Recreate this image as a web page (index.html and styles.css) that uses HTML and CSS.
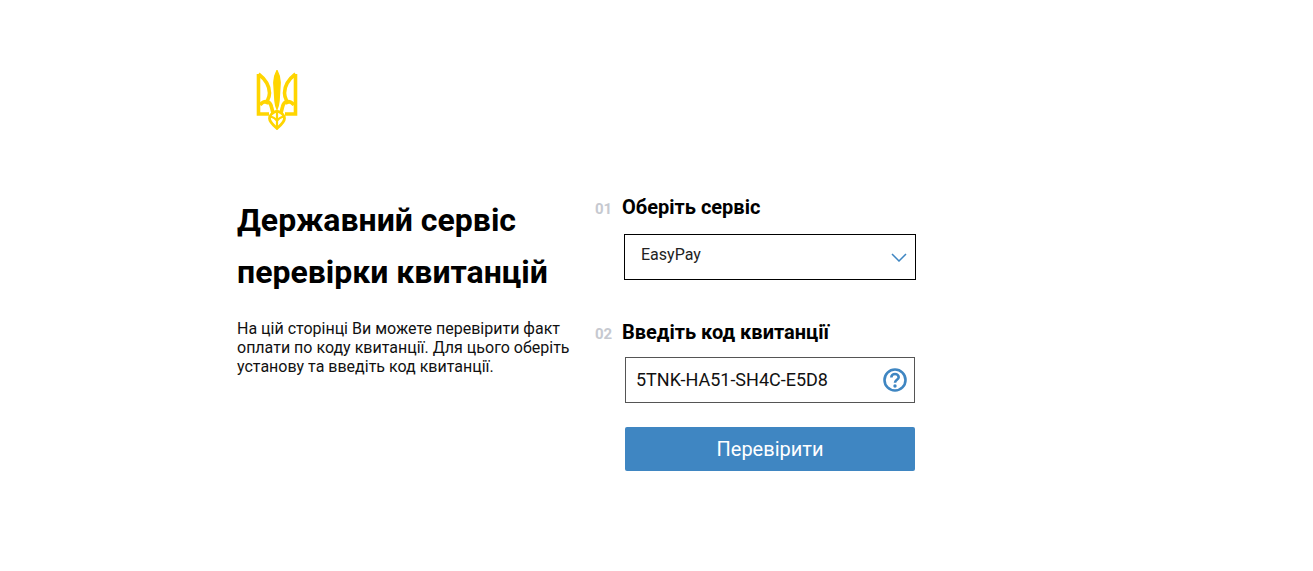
FILE: index.html
```html
<!DOCTYPE html>
<html lang="uk">
<head>
<meta charset="utf-8">
<title>Державний сервіс перевірки квитанцій</title>
<link rel="stylesheet" href="styles.css">
</head>
<body>
<main class="page">
  <header class="logo">
    <svg class="trident" width="42" height="60" viewBox="0 0 42 60" fill="none" stroke="#ffd500" stroke-width="3.600">
      <path d="M21 0.500C18 6 17.500 10 18 15L19 31C19.300 34 20 37 21 39C22 37 22.700 34 23 31L24 15C24.500 10 24 6 21 0.500Z" fill="#ffd500" stroke-width="1.500"/>
      <path d="M2.500 4V44H13"/>
      <path d="M39.500 4V44H29"/>
      <path d="M2.500 4C9 9 13.500 15 13.500 23C13.500 28 11.500 30 10 34"/>
      <path d="M39.500 4C33 9 28.500 15 28.500 23C28.500 28 30.500 30 32 34"/>
      <path d="M4 35C8 30 14 30 15.500 37L17 43"/>
      <path d="M38 35C34 30 28 30 26.500 37L25 43"/>
      <path d="M21 41C16.500 42.500 13.500 45 13.500 48.500C13.500 52 17 55 21 58.500C25 55 28.500 52 28.500 48.500C28.500 45 25.500 42.500 21 41Z" stroke-width="2.800"/>
      <path d="M21 41V58" stroke-width="2.200"/>
      <path d="M14.500 46.500C17 47 19.500 48.500 21 51C22.500 48.500 25 47 27.500 46.500" stroke-width="1.800"/>
    </svg>
  </header>
  <div class="columns">
    <section class="intro">
      <h1>Державний сервіс<br>перевірки квитанцій</h1>
      <p>На цій сторінці Ви можете перевірити факт оплати по коду квитанції. Для цього оберіть установу та введіть код квитанції.</p>
    </section>
    <form class="form">
      <div class="step step-one">
        <span class="num">01</span>
        <h2>Оберіть сервіс</h2>
      </div>
      <div class="select">
        <span>EasyPay</span>
        <svg width="16" height="9" viewBox="0 0 16 9" fill="none" stroke="#3f86c2" stroke-width="1.500"><path d="M1 1L8 8L15 1"/></svg>
      </div>
      <div class="step step-two">
        <span class="num">02</span>
        <h2>Введіть код квитанції</h2>
      </div>
      <div class="code">
        <span>5TNK-HA51-SH4C-E5D8</span>
        <svg width="24" height="24" viewBox="0 0 24 24" fill="none" stroke="#3f86c2">
          <circle cx="12" cy="12" r="10.500" stroke-width="2.600"/>
          <path d="M8.300 9.500C8.300 7.500 9.900 6 12 6C14.100 6 15.700 7.400 15.700 9.200C15.700 11.700 12 11.900 12 14.700" stroke-width="2.600"/>
          <circle cx="12" cy="18" r="1.700" fill="#3f86c2" stroke="none"/>
        </svg>
      </div>
      <button class="submit" type="button">Перевірити</button>
    </form>
  </div>
</main>
</body>
</html>
```
FILE: styles.css
```css
* { box-sizing: border-box; }
html, body { margin: 0; background: #fff; }
body {
  height: 571px;
  overflow: hidden;
  font-family: Roboto, "Liberation Sans", sans-serif;
  color: #000;
}
.page { padding: 70px 0 0 237px; }
.logo { padding-left: 19px; height: 60px; }
.trident { display: block; }
.columns { display: flex; margin-top: 63px; }
.intro { width: 358px; }
h1 {
  margin: 1px 0 0;
  font-size: 32px;
  line-height: 52px;
  font-weight: 700;
  color: #000;
}
.intro p {
  margin: 21px 0 0;
  width: 340px;
  font-size: 16px;
  line-height: 19px;
  color: #111;
}
.form { width: 320px; padding-top: 2px; }
.step { display: flex; align-items: baseline; }
.num {
  width: 27px;
  font-size: 15px;
  font-weight: 700;
  color: #c6c9d0;
}
h2 { margin: 0; font-size: 20px; line-height: 24px; font-weight: 700; }
.step-two { margin-top: 40px; }
.select {
  display: flex;
  align-items: center;
  justify-content: space-between;
  width: 292px;
  height: 46px;
  margin: 15px 0 0 29px;
  padding: 0 8px 0 16px;
  border: 1px solid #000;
  font-size: 16px;
  color: #222;
}
.select span { position: relative; top: -3px; }
.code {
  display: flex;
  align-items: center;
  justify-content: space-between;
  width: 290px;
  height: 46px;
  margin: 13px 0 0 30px;
  padding: 0 7px 0 10px;
  border: 1px solid #555;
  font-size: 18px;
  color: #111;
}
.code span { position: relative; top: -1px; }
.submit {
  display: block;
  width: 290px;
  height: 44px;
  margin: 24px 0 0 30px;
  border: 0;
  border-radius: 2px;
  background: #3f86c2;
  color: #fff;
  font-family: inherit;
  font-size: 20px;
}
```
